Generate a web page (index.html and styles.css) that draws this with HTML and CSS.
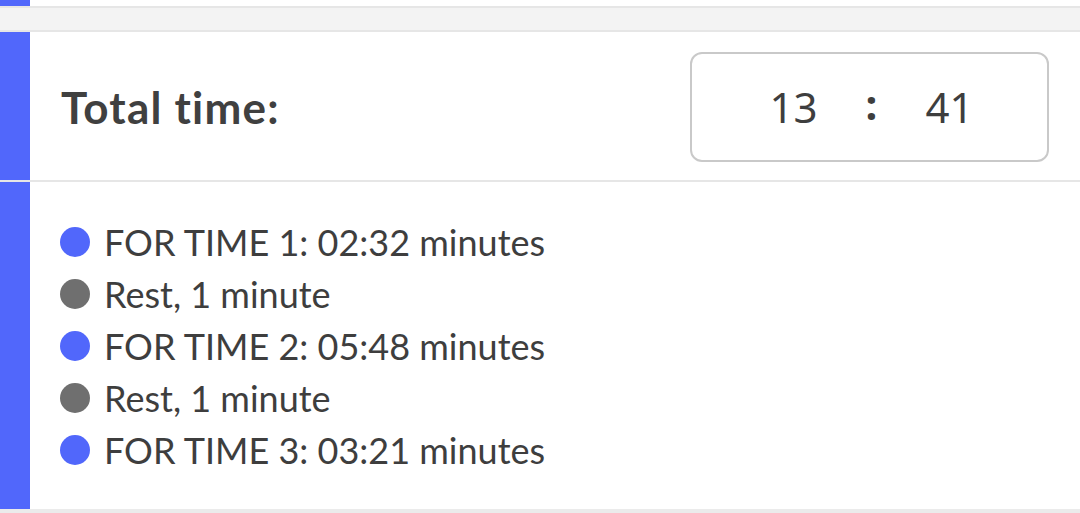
FILE: index.html
```html
<!DOCTYPE html>
<html>
<head>
<meta charset="utf-8">
<link rel="stylesheet" href="styles.css">
</head>
<body>
<div class="strip"><div class="bar"></div></div>
<div class="divider"></div>
<div class="gap"></div>
<div class="divider"></div>
<section class="card">
  <div class="bar"></div>
  <div class="card-body total">
    <h2 class="label">Total time:</h2>
    <div class="timebox">
      <span class="num">13</span>
      <span class="colon">:</span>
      <span class="num">41</span>
    </div>
  </div>
</section>
<div class="divider"></div>
<section class="card list-card">
  <div class="bar"></div>
  <ul class="card-body list">
    <li><span class="dot blue"></span>FOR TIME 1: 02:32 minutes</li>
    <li><span class="dot grey"></span>Rest, 1 minute</li>
    <li><span class="dot blue"></span>FOR TIME 2: 05:48 minutes</li>
    <li><span class="dot grey"></span>Rest, 1 minute</li>
    <li><span class="dot blue"></span>FOR TIME 3: 03:21 minutes</li>
  </ul>
</section>
<div class="divider end"></div>
</body>
</html>
```
FILE: styles.css
```css
html, body {
  margin: 0;
  padding: 0;
  background: #ffffff;
  width: 1080px;
  height: 513px;
  overflow: hidden;
}
body {
  font-family: "Lato", "Liberation Sans", sans-serif;
  color: #3e3e3e;
}
.strip {
  height: 6px;
  display: flex;
}
.bar {
  width: 30px;
  flex: none;
  background: #5167fb;
  align-self: stretch;
}
.divider {
  height: 2px;
  background: #e6e6e6;
}
.divider.end {
  height: 6px;
  background: #ebebeb;
}
.gap {
  height: 22px;
  background: #f3f3f3;
}
.card {
  display: flex;
}
.card-body {
  flex: 1;
}
.total {
  height: 148px;
  display: flex;
  align-items: center;
  justify-content: space-between;
  padding: 0 31px 0 31px;
}
.label {
  margin: 0;
  font-family: "Lato", "Liberation Sans", sans-serif;
  font-weight: 700;
  font-size: 44px;
  letter-spacing: 1.2px;
  color: #404040;
  padding-top: 2px;
}
.timebox {
  width: 359px;
  height: 110px;
  box-sizing: border-box;
  border: 2px solid #c9c9c9;
  border-radius: 12px;
  display: flex;
  align-items: center;
  justify-content: center;
  gap: 48px;
  font-family: "Noto Sans", "Open Sans", sans-serif;
  font-size: 42px;
  color: #3e3e3e;
  margin-top: 1px;
  padding-left: 4px;
}
.timebox .colon {
  font-weight: 700;
  position: relative;
  top: -3px;
}
.list-card .card-body {
  margin: 0;
  padding: 34px 0 33px 30px;
  list-style: none;
}
.list li {
  display: flex;
  align-items: center;
  height: 52px;
  font-size: 36px;
  color: #3e3e3e;
}
.dot {
  width: 30px;
  height: 30px;
  border-radius: 50%;
  flex: none;
  margin-right: 14px;
}
.dot.blue { background: #5167fb; }
.dot.grey { background: #6f6f6f; }
```
